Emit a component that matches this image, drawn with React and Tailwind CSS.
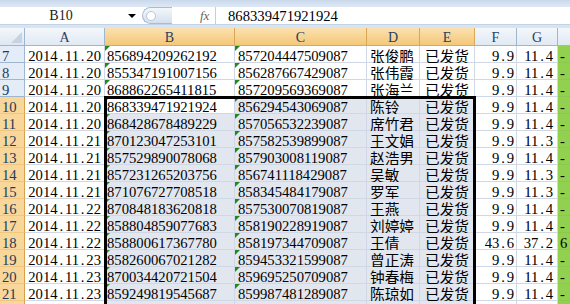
const rows = [
  [7, '2014.11.20', '856894209262192', '857204447509087', '张俊鹏', '9.9', '11.4', '-'],
  [8, '2014.11.20', '855347191007156', '856287667429087', '张伟霞', '9.9', '11.4', '-'],
  [9, '2014.11.20', '868862265411815', '857209569369087', '张海兰', '9.9', '11.4', '-'],
  [10, '2014.11.20', '868339471921924', '856294543069087', '陈铃', '9.9', '11.4', '-'],
  [11, '2014.11.20', '868428678489229', '857056532239087', '席竹君', '9.9', '11.4', '-'],
  [12, '2014.11.21', '870123047253101', '857582539899087', '王文娟', '9.9', '11.3', '-'],
  [13, '2014.11.21', '857529890078068', '857903008119087', '赵浩男', '9.9', '11.4', '-'],
  [14, '2014.11.21', '857231265203756', '856741118429087', '吴敏', '9.9', '11.3', '-'],
  [15, '2014.11.21', '871076727708518', '858345484179087', '罗军', '9.9', '11.3', '-'],
  [16, '2014.11.22', '870848183620818', '857530070819087', '王燕', '9.9', '11.4', '-'],
  [17, '2014.11.22', '858804859077683', '858190228919087', '刘婷婷', '9.9', '11.4', '-'],
  [18, '2014.11.22', '858800617367780', '858197344709087', '王倩', '43.6', '37.2', '6'],
  [19, '2014.11.23', '858260067021282', '859453321599087', '曾正涛', '9.9', '11.4', '-'],
  [20, '2014.11.23', '870034420721504', '859695250709087', '钟春梅', '9.9', '11.4', '-'],
  [21, '2014.11.23', '859249819545687', '859987481289087', '陈琼如', '9.9', '11.4', '-'],
];

// the sheet font has a half-width period, so give the dot a full digit cell
const Num = ({ v }) =>
  v.split('').map((ch, i) =>
    ch === '.' ? (
      <span key={i} className="inline-block w-[0.5em] text-center">
        .
      </span>
    ) : (
      ch
    )
  );

const Tri = () => (
  <span className="absolute left-0 top-0 w-0 h-0 border-t-[5px] border-r-[5px] border-t-[#1f8a1f] border-r-transparent" />
);

const Row = ({ r, blank }) => {
  const [n, date, b, c, name, f, g, h] = r;
  const sel = n >= 10;
  const selBg = sel ? 'bg-[#e1e6ef]' : 'bg-white';
  return (
    <div className="flex h-[17px]">
      <div
        className={
          sel
            ? 'w-[25px] shrink-0 border-r border-b border-r-[#d6a14c] border-b-[#f3c680] bg-[#f9d79b] pl-[2px] leading-[17px] pt-[2px] text-[#243b57]'
            : 'w-[25px] shrink-0 border-r border-b border-[#9eb6ce] bg-[#e4ecf7] pl-[2px] leading-[17px] pt-[2px] text-[#243b57]'
        }
      >
        {!blank && n}
      </div>
      <div className="w-[80px] shrink-0 border-r border-b border-[#d0d7e5] bg-white text-right pr-[3px] leading-[17px] pt-[2px] whitespace-nowrap">
        <Num v={date} />
      </div>
      <div
        className={`relative w-[130px] shrink-0 border-r border-b border-[#d0d7e5] pl-[2px] leading-[17px] pt-[2px] ${
          n === 10 ? 'bg-white' : selBg
        }`}
      >
        {!blank && <Tri />}
        {b}
      </div>
      <div className={`relative w-[132px] shrink-0 border-r border-b border-[#d0d7e5] pl-[3px] leading-[17px] pt-[2px] ${selBg}`}>
        {!blank && <Tri />}
        {c}
      </div>
      <div className={`w-[53px] shrink-0 border-r border-b border-[#d0d7e5] pl-[3px] leading-[17px] pt-[3px] whitespace-nowrap ${selBg}`}>
        {name}
      </div>
      <div className={`w-[55px] shrink-0 border-r border-b border-[#d0d7e5] text-center leading-[17px] pt-[3px] whitespace-nowrap ${selBg}`}>
        {!blank && '已发货'}
      </div>
      <div className="w-[42px] shrink-0 border-r border-b border-[#d0d7e5] bg-white text-right pr-[2px] leading-[17px] pt-[2px] whitespace-nowrap">
        <Num v={f} />
      </div>
      <div className="w-[41px] shrink-0 border-r border-b border-[#d0d7e5] bg-white text-right pr-[4px] leading-[17px] pt-[2px] whitespace-nowrap">
        <Num v={g} />
      </div>
      <div className="w-[60px] shrink-0 border-b border-[#8cc84b] bg-[#92d050] pl-[2px] leading-[17px] pt-[2px]">
        {h}
      </div>
    </div>
  );
};

const Head = ({ w, label, sel }) => (
  <div
    className={`${w} shrink-0 h-full border-r border-b flex items-center justify-center pt-[1px] ${
      sel
        ? 'bg-gradient-to-b from-[#fbe1b0] to-[#f3c878] border-[#d9a756] border-b-[#e2a94c]'
        : 'bg-gradient-to-b from-[#f3f7fb] to-[#e1e9f3] border-[#9eb6ce]'
    }`}
  >
    {label}
  </div>
);

export default function App() {
  return (
    <div className="relative w-[570px] h-[304px] overflow-hidden bg-white text-[14.67px] text-black font-[family-name:'Liberation_Serif','Noto_Sans_CJK_SC',serif]">
      <div className="h-[7px] bg-gradient-to-b from-[#c9d9ec] to-[#dfe9f5]" />
      <div className="h-[18px] flex items-center bg-white border-b border-[#c3d3e6]">
        <div className="w-[122px] h-full flex items-center justify-center text-[14px] text-[#222]">B10</div>
        <div className="w-[20px] h-full flex items-center justify-center">
          <span className="w-0 h-0 border-l-[4px] border-r-[4px] border-t-[4px] border-l-transparent border-r-transparent border-t-black" />
        </div>
        <div className="w-[30px] h-[17px] rounded-l-full border border-r-0 border-[#a8bcd4] bg-gradient-to-b from-[#f4f7fb] to-[#d5e0ee] flex items-center pl-[3px]">
          <span className="w-[10px] h-[10px] rounded-full border border-[#b8c7d9] bg-white" />
        </div>
        <div className="w-[28px] h-full" />
        <div className="w-[15px] h-full flex items-center italic text-[13px] text-[#666]">fx</div>
        <div className="w-px h-full bg-[#c3cfdd]" />
        <div className="pl-[12px] h-full flex items-center">868339471921924</div>
      </div>
      <div className="h-[3px] bg-[#d8e4f1]" />
      <div className="flex h-[18px] text-[14px] text-[#27405e]">
        <div className="relative w-[25px] shrink-0 h-full border-r border-b border-[#9eb6ce] bg-gradient-to-b from-[#f3f7fb] to-[#dfe7f2]">
          <svg className="absolute right-[2px] bottom-[2px]" width="11" height="11" viewBox="0 0 11 11">
            <polygon points="11,0 11,11 0,11" fill="#c6d3e2" />
          </svg>
        </div>
        <Head w="w-[80px]" label="A" />
        <Head w="w-[130px]" label="B" sel />
        <Head w="w-[132px]" label="C" sel />
        <Head w="w-[53px]" label="D" sel />
        <Head w="w-[55px]" label="E" sel />
        <Head w="w-[42px]" label="F" />
        <Head w="w-[41px]" label="G" />
        <Head w="w-[60px]" label="" />
      </div>
      {rows.map(r => (
        <Row key={r[0]} r={r} />
      ))}
      <Row r={[22, '', '', '', '', '', '', '']} blank />
      <div className="absolute left-[104px] top-[96px] w-[372px] h-[240px] border-[3px] border-black" />
    </div>
  );
}
